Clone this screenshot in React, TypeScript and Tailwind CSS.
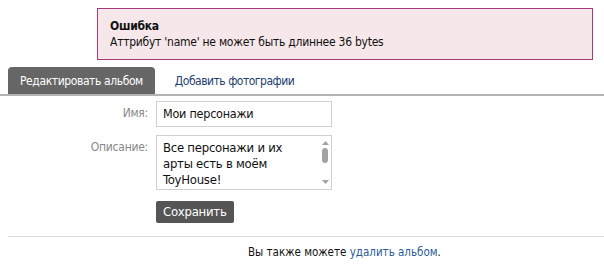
const font = { fontFamily: '"DejaVu Sans Condensed", Tahoma, "DejaVu Sans", sans-serif' };

function FakeScrollbar() {
  return (
    <div className="flex w-[12px] flex-col items-center justify-between py-[5px]">
      <svg width="7" height="4" viewBox="0 0 7 4">
        <polygon points="0,4 3.5,0 7,4" fill="#a3a3a3" />
      </svg>
      <div className="mb-auto mt-[3px] h-[15px] w-[6px] rounded-full bg-[#a3a3a3]" />
      <svg width="7" height="4" viewBox="0 0 7 4">
        <polygon points="0,0 3.5,4 7,0" fill="#a3a3a3" />
      </svg>
    </div>
  );
}

export default function App() {
  return (
    <div className="h-[268px] w-[604px] bg-white text-[12px] tracking-[-0.25px] text-[#111]" style={font}>
      <div className="px-[97px] pt-[8px] pr-[11px]">
        <div className="border border-[#a8397a] bg-[#f6e8ea] px-[12px] pb-[9px] pt-[9px] leading-[16px]">
          <p className="font-bold">Ошибка</p>
          <p>Аттрибут 'name' не может быть длиннее 36 bytes</p>
        </div>
      </div>

      <div className="mt-[7px] flex items-end border-b-2 border-[#b3b3b3] pl-[8px]">
        <div className="rounded-t-[4px] bg-[#666] px-[12px] pb-[5px] pt-[6px] leading-[16px] tracking-[-0.4px] text-white">
          Редактировать альбом
        </div>
        <div className="pl-[20px] pb-[5px] pt-[6px] leading-[16px] tracking-[-0.5px] text-[#1e3e6e]">
          Добавить фотографии
        </div>
      </div>

      <div className="mt-[5px] grid grid-cols-[148px_176px] gap-x-[8px] gap-y-[8px]">
        <div className="pt-[3px] text-right text-[#888]">Имя:</div>
        <div className="flex h-[26px] items-center border border-[#cfcfcf] px-[6px] text-[12.5px]">
          Мои персонажи
        </div>

        <div className="pt-[3px] text-right text-[#888]">Описание:</div>
        <div className="flex h-[55px] border border-[#cfcfcf]">
          <div className="flex-1 px-[6px] pt-[4px] text-[13px] leading-[16px]">
            Все персонажи и их арты есть в моём ToyHouse!
          </div>
          <FakeScrollbar />
        </div>

        <div />
        <div className="pt-[3px]">
          <button className="h-[22px] rounded-[2px] bg-[#555] px-[7px] text-[13px] text-white">
            Сохранить
          </button>
        </div>
      </div>

      <div className="ml-[8px] mt-[13px] border-t border-[#ddd]" />
      <p className="mt-[7px] pl-[248px] text-[11.5px] tracking-normal">
        Вы также можете <span className="text-[#2b5c95]">удалить альбом</span>.
      </p>
    </div>
  );
}
